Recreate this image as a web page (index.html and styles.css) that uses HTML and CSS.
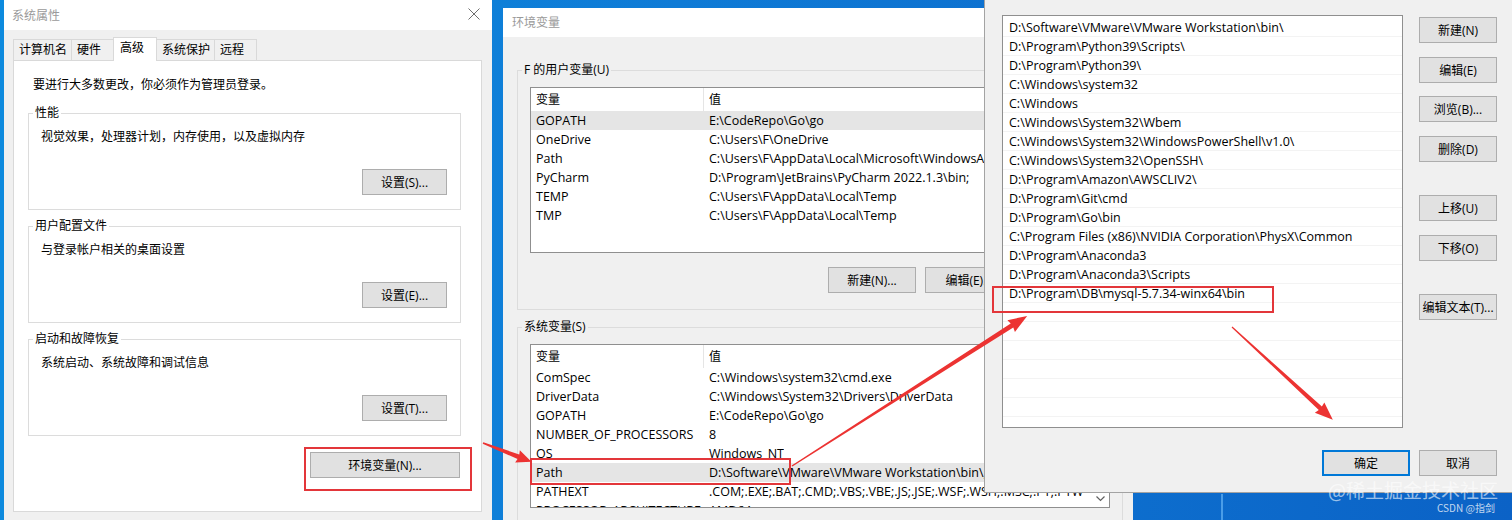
FILE: index.html
```html
<!DOCTYPE html>
<html lang="zh-CN">
<head>
  <meta charset="UTF-8">
  <title>环境变量 - Path</title>
  <link rel="stylesheet" href="styles.css">
</head>
<body>
  <div class="desktop">

    <!-- 系统属性 -->
    <div class="window sysprops">
      <div class="titlebar">
        <span class="title">系统属性</span>
        <svg class="close" width="12" height="12" viewBox="0 0 12 12"><path d="M0.5 0.5L11.5 11.5M11.5 0.5L0.5 11.5" stroke="#6e6e6e" stroke-width="1" fill="none"/></svg>
      </div>
      <div class="sp-body">
        <div class="tabs">
          <div class="tab">计算机名</div>
          <div class="tab">硬件</div>
          <div class="tab active">高级</div>
          <div class="tab">系统保护</div>
          <div class="tab">远程</div>
        </div>
        <div class="tab-panel">
          <p class="notice">要进行大多数更改，你必须作为管理员登录。</p>

          <div class="group">
            <div class="group-label">性能</div>
            <p class="group-text">视觉效果，处理器计划，内存使用，以及虚拟内存</p>
            <div class="group-actions"><button class="btn btn-settings">设置(S)...</button></div>
          </div>

          <div class="group">
            <div class="group-label">用户配置文件</div>
            <p class="group-text">与登录帐户相关的桌面设置</p>
            <div class="group-actions"><button class="btn btn-settings">设置(E)...</button></div>
          </div>

          <div class="group">
            <div class="group-label">启动和故障恢复</div>
            <p class="group-text">系统启动、系统故障和调试信息</p>
            <div class="group-actions"><button class="btn btn-settings">设置(T)...</button></div>
          </div>

          <div class="env-row"><button class="btn btn-env">环境变量(N)...</button></div>
        </div>
      </div>
    </div>

    <!-- 环境变量 -->
    <div class="window envvars">
      <div class="titlebar short">
        <span class="title">环境变量</span>
      </div>
      <div class="ev-body">
        <div class="group ev-group">
          <div class="group-label">F 的用户变量(U)</div>
          <div class="listview user-list">
            <div class="lv-table">
              <div class="lv-head"><div class="cell name">变量</div><div class="cell value">值</div></div>
              <div class="lv-row selected"><div class="cell name">GOPATH</div><div class="cell value">E:\CodeRepo\Go\go</div></div>
              <div class="lv-row"><div class="cell name">OneDrive</div><div class="cell value">C:\Users\F\OneDrive</div></div>
              <div class="lv-row"><div class="cell name">Path</div><div class="cell value">C:\Users\F\AppData\Local\Microsoft\WindowsApps;</div></div>
              <div class="lv-row"><div class="cell name">PyCharm</div><div class="cell value">D:\Program\JetBrains\PyCharm 2022.1.3\bin;</div></div>
              <div class="lv-row"><div class="cell name">TEMP</div><div class="cell value">C:\Users\F\AppData\Local\Temp</div></div>
              <div class="lv-row"><div class="cell name">TMP</div><div class="cell value">C:\Users\F\AppData\Local\Temp</div></div>
            </div>
          </div>
          <div class="ev-actions">
            <button class="btn btn-ev">新建(N)...</button>
            <button class="btn btn-ev">编辑(E)...</button>
            <button class="btn btn-ev">删除(D)</button>
          </div>
        </div>

        <div class="group ev-group">
          <div class="group-label">系统变量(S)</div>
          <div class="listview sys-list">
            <div class="lv-table">
              <div class="lv-head"><div class="cell name">变量</div><div class="cell value">值</div></div>
              <div class="lv-row"><div class="cell name">ComSpec</div><div class="cell value">C:\Windows\system32\cmd.exe</div></div>
              <div class="lv-row"><div class="cell name">DriverData</div><div class="cell value">C:\Windows\System32\Drivers\DriverData</div></div>
              <div class="lv-row"><div class="cell name">GOPATH</div><div class="cell value">E:\CodeRepo\Go\go</div></div>
              <div class="lv-row"><div class="cell name">NUMBER_OF_PROCESSORS</div><div class="cell value">8</div></div>
              <div class="lv-row"><div class="cell name">OS</div><div class="cell value">Windows_NT</div></div>
              <div class="lv-row selected"><div class="cell name">Path</div><div class="cell value">D:\Software\VMware\VMware Workstation\bin\;C:\Program Files\Common Files</div></div>
              <div class="lv-row"><div class="cell name">PATHEXT</div><div class="cell value">.COM;.EXE;.BAT;.CMD;.VBS;.VBE;.JS;.JSE;.WSF;.WSH;.MSC;.PY;.PYW</div></div>
              <div class="lv-row"><div class="cell name">PROCESSOR_ARCHITECTURE</div><div class="cell value">AMD64</div></div>
            </div>
            <div class="scrollbar">
              <div class="scroll-down">
                <svg width="9" height="6" viewBox="0 0 9 6"><path d="M0.5 0.5L4.5 4.5L8.5 0.5" stroke="#606060" stroke-width="1.2" fill="none"/></svg>
              </div>
            </div>
          </div>
        </div>
      </div>
    </div>

    <!-- 编辑环境变量 -->
    <div class="window editpath">
      <div class="ep-inner">
        <div class="ep-main">
          <div class="path-list">
            <div class="path-row">D:\Software\VMware\VMware Workstation\bin\</div>
            <div class="path-row">D:\Program\Python39\Scripts\</div>
            <div class="path-row">D:\Program\Python39\</div>
            <div class="path-row">C:\Windows\system32</div>
            <div class="path-row">C:\Windows</div>
            <div class="path-row">C:\Windows\System32\Wbem</div>
            <div class="path-row">C:\Windows\System32\WindowsPowerShell\v1.0\</div>
            <div class="path-row">C:\Windows\System32\OpenSSH\</div>
            <div class="path-row">D:\Program\Amazon\AWSCLIV2\</div>
            <div class="path-row">D:\Program\Git\cmd</div>
            <div class="path-row">D:\Program\Go\bin</div>
            <div class="path-row">C:\Program Files (x86)\NVIDIA Corporation\PhysX\Common</div>
            <div class="path-row">D:\Program\Anaconda3</div>
            <div class="path-row">D:\Program\Anaconda3\Scripts</div>
            <div class="path-row">D:\Program\DB\mysql-5.7.34-winx64\bin</div>
            <div class="path-row"></div>
            <div class="path-row"></div>
            <div class="path-row"></div>
            <div class="path-row"></div>
            <div class="path-row"></div>
            <div class="path-row"></div>
            <div class="path-row"></div>
          </div>
          <div class="ep-buttons">
            <button class="btn btn-side">新建(N)</button>
            <button class="btn btn-side">编辑(E)</button>
            <button class="btn btn-side">浏览(B)...</button>
            <button class="btn btn-side">删除(D)</button>
            <button class="btn btn-side spaced">上移(U)</button>
            <button class="btn btn-side">下移(O)</button>
            <button class="btn btn-side spaced">编辑文本(T)...</button>
          </div>
        </div>
        <div class="ep-footer">
          <button class="btn btn-ok">确定</button>
          <button class="btn btn-side">取消</button>
        </div>
      </div>
    </div>

    <div class="taskbar-line"></div>

    <!-- 标注 -->
    <svg class="annotations" width="1512" height="520" viewBox="0 0 1512 520">
      <g fill="none" stroke="#e3363a" stroke-width="2">
        <rect x="305" y="448" width="166" height="42"/>
        <rect x="531" y="459" width="259" height="25"/>
        <rect x="993" y="287" width="280" height="25"/>
      </g>
      <g fill="#ec3332">
        <g transform="translate(483 443) rotate(21.2)">
          <polygon points="0,-0.8 38,-2.4 37,-6.5 52,0 37,6.5 38,2.4 0,0.8"/>
        </g>
        <g transform="translate(792 466) rotate(-32.55)">
          <polygon points="0,-0.7 261,-2.4 260,-7 279,0 260,7 261,2.4 0,0.7"/>
        </g>
        <g transform="translate(1232 327) rotate(42.6)">
          <polygon points="0,-0.6 120,-2.3 119,-7 137,0 119,7 120,2.3 0,0.6"/>
        </g>
      </g>
    </svg>

    <div class="watermark">@稀土掘金技术社区</div>
    <div class="credit">CSDN @指剑</div>
  </div>
</body>
</html>
```

FILE: styles.css
```css
* {
  box-sizing: border-box;
}

body {
  margin: 0;
  font-family: "Open Sans", "Noto Sans CJK SC", sans-serif;
  font-size: 12px;
  color: #000;
}

p {
  margin: 0;
}

.desktop {
  position: relative;
  width: 1512px;
  height: 520px;
  overflow: hidden;
  background: linear-gradient(90deg, #0d8ade 0%, #0f7bd6 45%, #0b62c6 100%);
}

.window {
  position: absolute;
  background: #f0f0f0;
  overflow: hidden;
}

.titlebar {
  height: 30px;
  background: #fff;
  display: flex;
  align-items: center;
  justify-content: space-between;
  padding: 0 12px 2px 8px;
  color: #9a9a9a;
  font-family: "Noto Sans CJK SC", sans-serif;
}

.titlebar.short {
  height: 29px;
  padding-left: 9px;
}

/* buttons */
.btn {
  display: inline-flex;
  align-items: center;
  justify-content: center;
  height: 26px;
  padding: 0;
  border: 1px solid #adadad;
  background: #e1e1e1;
  font: inherit;
  color: #000;
  white-space: nowrap;
}

/* 系统属性 */
.sysprops {
  left: 4px;
  top: 0;
  width: 488px;
  height: 540px;
}

.sp-body {
  padding: 7px 10px 0 9px;
}

.tabs {
  display: flex;
  align-items: flex-end;
  height: 23px;
  position: relative;
  z-index: 1;
}

.tab {
  height: 21px;
  min-width: 43px;
  padding: 0 4px 0 5px;
  border: 1px solid #d9d9d9;
  border-bottom: none;
  background: #f0f0f0;
  line-height: 19px;
  margin-left: -1px;
}

.tab:first-child {
  margin-left: 0;
}

.tab.active {
  height: 24px;
  background: #fff;
  margin-bottom: -1px;
  padding: 0 12px 0 6px;
  line-height: 19px;
}

.tab-panel {
  background: #fff;
  border: 1px solid #d9d9d9;
  padding: 16px 20px 33px 14px;
}

.notice {
  line-height: 16px;
  margin: 0 0 20px 5px;
}

.group {
  border: 1px solid #dcdcdc;
  padding: 0 13px 14px 12px;
  margin-bottom: 16px;
}

.group-label {
  width: fit-content;
  line-height: 16px;
  margin: -9px 0 0 -8px;
  padding: 0 2px;
  background: #fff;
}

.group-text {
  line-height: 16px;
  margin-top: 8px;
}

.group-actions {
  display: flex;
  justify-content: flex-end;
  margin-top: 24px;
}

.btn-settings {
  width: 85px;
}

.env-row {
  display: flex;
  justify-content: flex-end;
  margin-right: 1px;
}

.btn-env {
  width: 150px;
}

/* 环境变量 */
.envvars {
  left: 503px;
  top: 8px;
  width: 630px;
  height: 540px;
}

.ev-body {
  padding: 33px 10px 0 14px;
}

.ev-group {
  padding: 0 12px 16px 12px;
  margin-bottom: 17px;
}

.ev-group .group-label {
  background: #f0f0f0;
}

.listview {
  display: flex;
  margin-top: 9px;
  background: #fff;
  border: 1px solid #8f8f8f;
  overflow: hidden;
}

.user-list {
  height: 166px;
}

.sys-list {
  height: 164px;
}

.lv-table {
  flex: 1;
  min-width: 0;
}

.lv-head,
.lv-row {
  display: flex;
  white-space: nowrap;
}

.lv-head {
  height: 23px;
  line-height: 23px;
}

.lv-row {
  height: 19px;
  line-height: 19px;
  font-size: 12.5px;
}

.lv-row.selected {
  background: #e5e5e5;
}

.cell.name {
  flex-shrink: 0;
  width: 173px;
  padding-left: 5px;
}

.lv-head .cell.name {
  border-right: 1px solid #e5e5e5;
}

.cell.value {
  padding-left: 5px;
  overflow: hidden;
}

.scrollbar {
  width: 17px;
  flex-shrink: 0;
  display: flex;
  flex-direction: column;
  justify-content: flex-end;
  background: #fff;
}

.scroll-down {
  height: 17px;
  display: flex;
  align-items: center;
  justify-content: center;
}

.ev-actions {
  display: flex;
  justify-content: flex-end;
  gap: 9px;
  margin-top: 14px;
}

.btn-ev {
  width: 88px;
}

/* 编辑环境变量 */
.editpath {
  left: 984px;
  top: 0;
  width: 540px;
  height: 493px;
  border-left: 1px solid #a3a3a3;
  border-bottom: 1px solid #a3a3a3;
}

.ep-inner {
  width: 512px;
  padding: 15px 0 0 17px;
}

.ep-main {
  display: flex;
}

.path-list {
  width: 401px;
  height: 413px;
  padding-top: 2px;
  background: #fff;
  border: 1px solid #8f8f8f;
  overflow: hidden;
}

.path-row {
  height: 19px;
  line-height: 19px;
  font-size: 12.5px;
  padding-left: 6px;
  border-bottom: 1px solid #f3f3f3;
  white-space: nowrap;
}

.ep-buttons {
  display: flex;
  flex-direction: column;
  margin-left: 16px;
  padding-top: 2px;
  gap: 13.5px;
}

.btn-side {
  width: 78px;
}

.ep-buttons .spaced {
  margin-top: 20px;
}

.ep-footer {
  display: flex;
  justify-content: flex-end;
  gap: 9px;
  margin-top: 22px;
}

.btn-ok {
  width: 88px;
  border-color: #0078d7;
  box-shadow: inset 0 0 0 1px #0078d7;
}

/* desktop extras */
.taskbar-line {
  position: absolute;
  left: 1221px;
  top: 494px;
  width: 2px;
  height: 26px;
  background: #4a9de8;
}

.annotations {
  position: absolute;
  left: 0;
  top: 0;
  pointer-events: none;
}

.watermark {
  position: absolute;
  left: 1328px;
  top: 477px;
  font-family: "Noto Sans CJK SC", sans-serif;
  font-size: 19px;
  line-height: 26px;
  color: rgba(255, 255, 255, 0.6);
  white-space: nowrap;
}

.credit {
  position: absolute;
  left: 1437px;
  top: 502px;
  font-family: "Noto Sans CJK SC", sans-serif;
  font-size: 10px;
  line-height: 12px;
  color: rgba(255, 255, 255, 0.75);
  white-space: nowrap;
}
```
